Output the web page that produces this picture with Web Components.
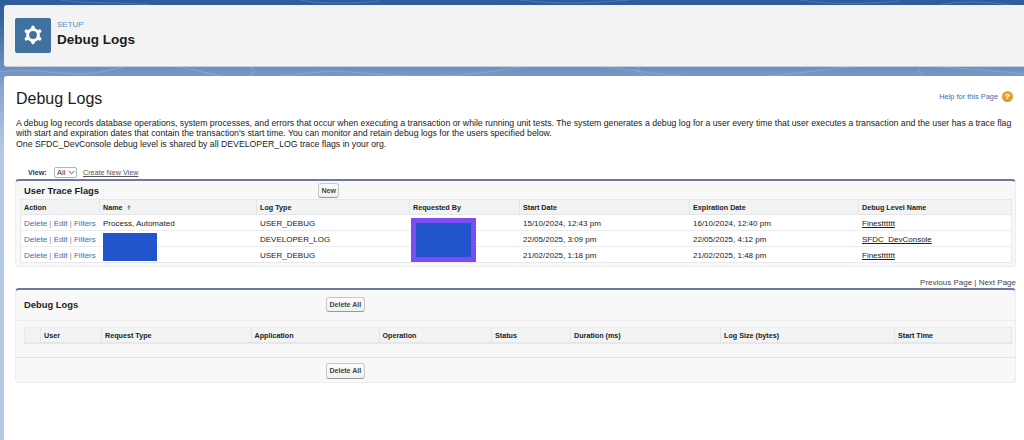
<!DOCTYPE html>
<html>
<head>
<meta charset="utf-8">
<title>Debug Logs</title>
<style>
html, body { margin: 0; height: 100%; }
body { font-family: "Liberation Sans", Arial, sans-serif; overflow: hidden; }
</style>
</head>
<body>
<sf-app>
  <sf-header slot="header" eyebrow="SETUP" title="Debug Logs"></sf-header>
  <sf-panel>
    <sf-title-row slot="title" heading="Debug Logs"></sf-title-row>
    <sf-intro slot="intro">A debug log records database operations, system processes, and errors that occur when executing a transaction or while running unit tests. The system generates a debug log for a user every time that user executes a transaction and the user has a trace flag with start and expiration dates that contain the transaction's start time. You can monitor and retain debug logs for the users specified below.<br>One SFDC_DevConsole debug level is shared by all DEVELOPER_LOG trace flags in your org.</sf-intro>
    <sf-view-bar slot="intro"></sf-view-bar>

    <sf-card slot="cards" heading="User Trace Flags" button="New" style="--title-w:294px;--head-h:18px">
      <sf-table style="--cols:78px 157px 153px 110px 170px 169px 1fr;margin:0 3px 3px 4px">
        <sf-row head><sf-cell>Action</sf-cell><sf-cell line>Name&nbsp; <sf-sort></sf-sort></sf-cell><sf-cell line>Log Type</sf-cell><sf-cell line>Requested By</sf-cell><sf-cell line>Start Date</sf-cell><sf-cell line>Expiration Date</sf-cell><sf-cell line>Debug Level Name</sf-cell></sf-row>
        <sf-row><sf-cell><sf-actions></sf-actions></sf-cell><sf-cell line-pad>Process, Automated</sf-cell><sf-cell line-pad>USER_DEBUG</sf-cell><sf-cell line-pad></sf-cell><sf-cell line-pad>15/10/2024, 12:43 pm</sf-cell><sf-cell line-pad>16/10/2024, 12:40 pm</sf-cell><sf-cell line-pad><u>Finestttttt</u></sf-cell></sf-row>
        <sf-row><sf-cell><sf-actions></sf-actions></sf-cell><sf-cell line-pad></sf-cell><sf-cell line-pad>DEVELOPER_LOG</sf-cell><sf-cell line-pad></sf-cell><sf-cell line-pad>22/05/2025, 3:09 pm</sf-cell><sf-cell line-pad>22/05/2025, 4:12 pm</sf-cell><sf-cell line-pad><u>SFDC_DevConsole</u></sf-cell></sf-row>
        <sf-row><sf-cell><sf-actions></sf-actions></sf-cell><sf-cell line-pad></sf-cell><sf-cell line-pad>USER_DEBUG</sf-cell><sf-cell line-pad></sf-cell><sf-cell line-pad>21/02/2025, 1:18 pm</sf-cell><sf-cell line-pad>21/02/2025, 1:48 pm</sf-cell><sf-cell line-pad><u>Finestttttt</u></sf-cell></sf-row>
        <sf-redact style="left:82px;top:33px;width:54px;height:28px"></sf-redact>
        <sf-redact framed style="left:390px;top:17.5px;width:55px;height:34px"></sf-redact>
      </sf-table>
    </sf-card>

    <sf-pager slot="cards"></sf-pager>

    <sf-card slot="cards" heading="Debug Logs" button="Delete All" footer style="--title-w:302px;--head-h:30px">
      <sf-table style="--cols:15px 61px 149.5px 128px 112.5px 79px 150px 174px 1fr;margin:6.5px 3.5px 13px 8px">
        <sf-row head><sf-cell></sf-cell><sf-cell line>User</sf-cell><sf-cell line>Request Type</sf-cell><sf-cell line>Application</sf-cell><sf-cell line>Operation</sf-cell><sf-cell line>Status</sf-cell><sf-cell line>Duration (ms)</sf-cell><sf-cell line>Log Size (bytes)</sf-cell><sf-cell line>Start Time</sf-cell></sf-row>
      </sf-table>
    </sf-card>
  </sf-panel>
</sf-app>

<script>
// small helper, every element gets an open shadow root from a template string
function shadow(el, html) {
  el.attachShadow({ mode: "open" });
  el.shadowRoot.innerHTML = html;
}

class SfApp extends HTMLElement {
  constructor() {
    super();
    shadow(this, `
  <style>
:host {
	display: block;
	position: relative;
	height: 440px;
	overflow: hidden;
	padding: 5px 0 0 4px;
	box-sizing: border-box;
	background: linear-gradient(180deg, #2d5c9d 0, #35659f 20px, #6d90c2 68px, #8ba7d2 90px, #b5c7e6 150px, #b7c8e7 100%);
}
svg {
	position: absolute;
	left: 0;
	top: 0;
}
.stack {
	position: relative;
	display: flex;
	flex-direction: column;
	gap: 9px;
	height: 100%;
}
  </style>
  <svg width="1024" height="80" fill="none" stroke="#ffffff" stroke-opacity=".16" stroke-width="1">
    <path d="M0 72C40 66 70 80 110 70S180 66 220 76 300 68 350 72 440 80 500 70 600 66 660 74 760 78 820 70 950 66 1024 74"/>
    <path d="M60 0C90 4 120 2 150 5M300 0C320 4 350 4 380 1M520 0C560 5 590 3 630 0M800 0C830 5 870 4 900 1M940 5C960 0 990 2 1010 5"/>
    <path d="M250 67C260 72 250 76 240 80M640 67C630 72 650 76 660 80M920 67C915 72 925 76 930 80"/>
  </svg>
  <div class="stack"><slot name="header"></slot><slot></slot></div>`);
  }
}

class SfHeader extends HTMLElement {
  connectedCallback() {
    shadow(this, `
  <style>
:host {
	display: flex;
	flex: none;
	align-items: center;
	gap: 6px;
	height: 62px;
	box-sizing: border-box;
	padding: 0 0 1px 11px;
	background: #f3f3f3;
	border-radius: 3px 0 0 3px;
	border-bottom: 1px solid #c9ced6;
}
.icon {
	width: 36px;
	height: 35px;
	border-radius: 2px;
	background: #40719f;
	display: flex;
	align-items: center;
	justify-content: center;
}
.text {
	margin-top: -3px;
}
.eyebrow {
	font-size: 8px;
	line-height: 10px;
	color: #5f8fc4;
}
.title {
	font-size: 13.5px;
	font-weight: 700;
	line-height: 17px;
	margin-top: 1px;
	color: #1c1c1c;
}
  </style>
  <div class="icon">
    <svg width="20" height="20" viewBox="-10 -10 20 20" fill="none" stroke="#fff">
      <circle r="5.4" stroke-width="3"/>
      <g stroke-width="3.6" stroke-linecap="round">
        <path d="M0-6.6V-7.6"/><path d="M0 6.6V7.6"/>
        <path d="M5.72-3.3L6.58-3.8"/><path d="M-5.72-3.3L-6.58-3.8"/>
        <path d="M5.72 3.3L6.58 3.8"/><path d="M-5.72 3.3L-6.58 3.8"/>
      </g>
    </svg>
  </div>
  <div class="text">
    <div class="eyebrow">${this.getAttribute("eyebrow")}</div>
    <div class="title">${this.getAttribute("title")}</div>
  </div>`);
  }
}

class SfPanel extends HTMLElement {
  constructor() {
    super();
    shadow(this, `
  <style>
:host {
	display: block;
	flex: 1;
	background: #fff;
	border-radius: 3px 0 0 0;
	padding: 13px 8px 0 11px;
	color: #222;
	font-size: 9px;
}
  </style>
  <slot name="title"></slot><slot name="intro"></slot><slot name="cards"></slot>`);
  }
}

class SfTitleRow extends HTMLElement {
  connectedCallback() {
    shadow(this, `
  <style>
:host {
	display: flex;
	justify-content: space-between;
	align-items: center;
	height: 20px;
	padding: 0 3px 0 1px;
}
h1 {
	margin: 0;
	font-size: 16px;
	font-weight: 400;
	color: #1c1c1c;
}
.help {
	display: flex;
	align-items: center;
	gap: 4px;
	font-size: 7.4px;
	color: #3d6cb0;
	margin-top: -6px;
}
.q {
	width: 11px;
	height: 11px;
	border-radius: 50%;
	background: radial-gradient(circle at 50% 35%, #f0b040, #d98a1e);
	color: #fff;
	font-size: 8px;
	font-weight: 700;
	line-height: 11px;
	text-align: center;
}
  </style>
  <h1>${this.getAttribute("heading")}</h1>
  <div class="help">Help for this Page <span class="q">?</span></div>`);
  }
}

class SfIntro extends HTMLElement {
  constructor() {
    super();
    shadow(this, `
  <style>
:host {
	display: block;
	margin: 9px 0 0 1px;
	font-size: 8.72px;
	line-height: 10.3px;
	color: #222;
}
  </style>
  <slot></slot>`);
  }
}

class SfViewBar extends HTMLElement {
  connectedCallback() {
    shadow(this, `
  <style>
:host {
	display: flex;
	align-items: center;
	height: 12px;
	margin: 17.5px 0 1px 13px;
	font-size: 7.2px;
	color: #333;
}
b {
	width: 26px;
}
.select {
	display: flex;
	align-items: center;
	justify-content: space-between;
	width: 23px;
	height: 11px;
	box-sizing: border-box;
	padding: 0 1px 0 2px;
	border: 1px solid #b5b5b5;
	border-radius: 2px;
	font-size: 7.5px;
	background: #fff;
}
a {
	margin-left: 6px;
	color: #555;
	text-decoration: underline;
}
  </style>
  <b>View:</b>
  <div class="select">All <svg width="7" height="5" viewBox="0 0 7 5" fill="none" stroke="#444" stroke-width=".9"><path d="M.7 1l2.8 2.8L6.3 1"/></svg></div>
  <a>Create New View</a>`);
  }
}

class SfButton extends HTMLElement {
  constructor() {
    super();
    shadow(this, `
  <style>
:host {
	display: inline-flex;
	align-items: center;
	justify-content: center;
	box-sizing: border-box;
	height: 15.5px;
	padding: 0 2.5px;
	background: linear-gradient(#fdfdfd, #f0f0f0);
	border: 1px solid #c8c8c8;
	border-bottom-color: #999;
	border-radius: 3px;
	font-size: 7px;
	font-weight: 700;
	color: #444;
}
  </style>
  <slot></slot>`);
  }
}

class SfCard extends HTMLElement {
  connectedCallback() {
    const label = this.getAttribute("button");
    const foot = this.hasAttribute("footer")
      ? `<div class="foot"><sf-button>${label}</sf-button></div>`
      : "";
    shadow(this, `
  <style>
:host {
	display: block;
	background: #f8f8f8;
	border: 1px solid #ececec;
	border-top: 2px solid #6d7a9b;
	border-radius: 4px;
}
.head {
	display: flex;
	align-items: center;
	height: var(--head-h);
	padding-left: 8px;
}
:host([footer]) .head {
	border-bottom: 1px solid #ececec;
}
h2 {
	width: var(--title-w);
	margin: 0;
	font-size: 9.4px;
	font-weight: 700;
	color: #1c1c1c;
	flex: none;
}
.foot {
	display: flex;
	align-items: flex-start;
	height: 25px;
	box-sizing: border-box;
	padding: 5px 0 0 310px;
	border-top: 1px solid #e4e4e4;
}
  </style>
  <div class="head"><h2>${this.getAttribute("heading")}</h2><sf-button>${label}</sf-button></div>
  <slot></slot>
  ${foot}`);
  }
}

class SfPager extends HTMLElement {
  constructor() {
    super();
    shadow(this, `
  <style>
:host {
	display: block;
	margin-top: 10.3px;
	height: 10px;
	line-height: 10px;
	text-align: right;
	font-size: 8px;
	color: #444;
}
  </style>
  Previous Page | Next Page`);
  }
}

class SfTable extends HTMLElement {
  constructor() {
    super();
    shadow(this, `
  <style>
:host {
	display: block;
	position: relative;
	border: 1px solid #e6e8e9;
	background: #fff;
	font-size: 8px;
	color: #222;
}
  </style>
  <slot></slot>`);
  }
}

class SfRow extends HTMLElement {
  constructor() {
    super();
    shadow(this, `
  <style>
:host {
	display: grid;
	grid-template-columns: var(--cols);
	height: 16px;
	padding-top: 1px;
	box-sizing: border-box;
	border-bottom: 1px solid #ececec;
	align-items: stretch;
}
:host(:last-of-type) {
	height: 15px;
	border-bottom: 0;
}
:host([head]) {
	height: 15px;
	padding-top: 0;
	background: #f2f3f3;
	border-bottom: 1px solid #e3e5e6;
	font-size: 7.2px;
	font-weight: 700;
}
  </style>
  <slot></slot>`);
  }
}

class SfCell extends HTMLElement {
  constructor() {
    super();
    shadow(this, `
  <style>
:host {
	display: flex;
	align-items: center;
	padding-left: 3px;
	white-space: nowrap;
	overflow: hidden;
}
:host([line]) {
	border-left: 1px solid #e3e5e6;
}
:host([line-pad]) {
	padding-left: 4px;
}
  </style>
  <slot></slot>`);
  }
}

class SfActions extends HTMLElement {
  constructor() {
    super();
    shadow(this, `
  <style>
:host {
	display: inline;
	color: #8a8a8a;
}
a {
	color: #3d6cb0;
}
  </style>
  <a>Delete</a> | <a>Edit</a> | <a>Filters</a>`);
  }
}

class SfSort extends HTMLElement {
  constructor() {
    super();
    shadow(this, `
  <style>
:host {
	display: inline-block;
	margin-left: 2px;
}
  </style>
  <svg width="4" height="5" viewBox="0 0 5 6" fill="#777"><path d="M2.5 0L5 2.6H3.1V6H1.9V2.6H0z"/></svg>`);
  }
}

// blue boxes that cover the names in the screenshot
class SfRedact extends HTMLElement {
  constructor() {
    super();
    shadow(this, `
  <style>
:host {
	position: absolute;
	background: #2255cc;
}
:host([framed]) {
	border: 5px solid #7c4df2;
}
  </style>`);
  }
}

customElements.define("sf-app", SfApp);
customElements.define("sf-header", SfHeader);
customElements.define("sf-panel", SfPanel);
customElements.define("sf-title-row", SfTitleRow);
customElements.define("sf-intro", SfIntro);
customElements.define("sf-view-bar", SfViewBar);
customElements.define("sf-button", SfButton);
customElements.define("sf-card", SfCard);
customElements.define("sf-pager", SfPager);
customElements.define("sf-table", SfTable);
customElements.define("sf-row", SfRow);
customElements.define("sf-cell", SfCell);
customElements.define("sf-actions", SfActions);
customElements.define("sf-sort", SfSort);
customElements.define("sf-redact", SfRedact);
</script>
</body>
</html>
